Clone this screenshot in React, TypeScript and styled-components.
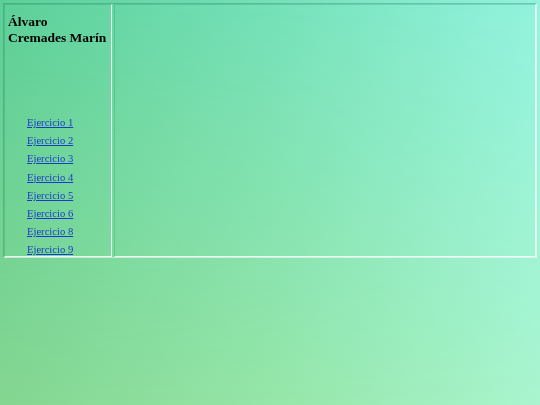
import React from 'react';
import styled, { createGlobalStyle } from 'styled-components';

const GlobalStyle = createGlobalStyle`
  html, body {
    margin: 0;
    padding: 0;
    height: 100%;
  }
  body {
    background: linear-gradient(to right, #84d690 0%, #96e6a8 50%, #aaf5cf 100%);
    font-family: "Liberation Serif", "Times New Roman", serif;
  }
  #root {
    height: 100%;
  }
`;

const Backdrop = styled.div`
  position: fixed;
  inset: 0;
  background: linear-gradient(to right, #5ccf98 0%, #74e0b8 50%, #92f3de 100%);
  -webkit-mask-image: linear-gradient(to bottom, #000 0%, rgba(0, 0, 0, 0.35) 65%, transparent 100%);
  mask-image: linear-gradient(to bottom, #000 0%, rgba(0, 0, 0, 0.35) 65%, transparent 100%);
`;

const Layout = styled.div`
  position: relative;
  padding: 3px;
  box-sizing: border-box;
`;

const Table = styled.div`
  display: flex;
  gap: 2px;
  width: 534px;
  height: 255px;
  box-sizing: border-box;
  border: 1px solid;
  border-color: rgba(30, 110, 80, 0.3) rgba(255, 255, 255, 0.55) rgba(255, 255, 255, 0.55) rgba(30, 110, 80, 0.3);
`;

const Cell = styled.div<{ $width?: number }>`
  box-sizing: border-box;
  border: 1px solid;
  border-color: rgba(30, 110, 80, 0.2) rgba(255, 255, 255, 0.85) rgba(255, 255, 255, 0.85) rgba(30, 110, 80, 0.2);
  ${(p) => (p.$width ? `width: ${p.$width}px; flex: none;` : 'flex: 1;')}
  display: flex;
  flex-direction: column;
`;

const Name = styled.h3`
  margin: 9px 0 0 3px;
  font-size: 13.5px;
  line-height: 16px;
  font-weight: bold;
  color: #000;
`;

const Links = styled.ul`
  list-style: none;
  margin: auto 0 -3px 0;
  padding: 0 0 0 22px;
`;

const Item = styled.li`
  height: 18.1px;
  line-height: 18px;
  font-size: 10.6px;
`;

const Link = styled.a`
  color: #1a3acc;
  text-decoration: underline;
`;

const ejercicios = [1, 2, 3, 4, 5, 6, 8, 9];

export default function App() {
  return (
    <>
      <GlobalStyle />
      <Backdrop />
      <Layout>
        <Table>
          <Cell $width={108}>
            <Name>
              Álvaro
              <br />
              Cremades Marín
            </Name>
            <Links>
              {ejercicios.map((n) => (
                <Item key={n}>
                  <Link href={`#ejercicio${n}`}>Ejercicio {n}</Link>
                </Item>
              ))}
            </Links>
          </Cell>
          <Cell />
        </Table>
      </Layout>
    </>
  );
}
